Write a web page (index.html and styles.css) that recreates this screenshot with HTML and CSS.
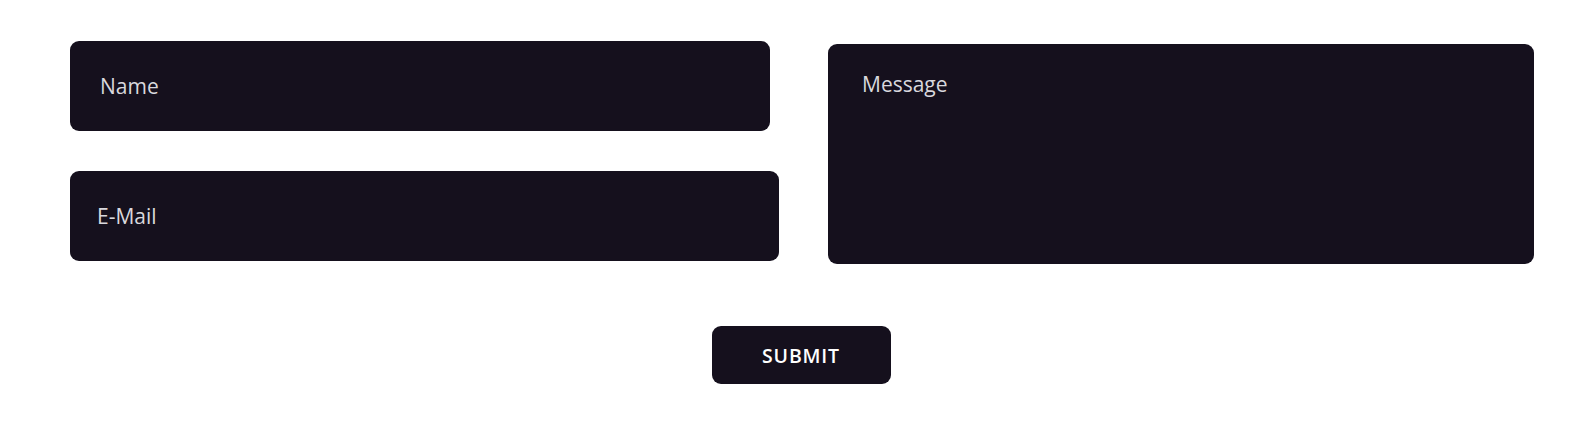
FILE: index.html
```html
<!DOCTYPE html>
<html lang="en">
<head>
<meta charset="utf-8">
<title>Contact</title>
<link rel="stylesheet" href="styles.css">
</head>
<body>
<form class="contact">
  <div class="fields">
    <div class="col-left">
      <input class="field field-name" type="text" placeholder="Name">
      <input class="field field-email" type="email" placeholder="E-Mail">
    </div>
    <textarea class="field field-message" placeholder="Message"></textarea>
  </div>
  <div class="actions">
    <button class="submit" type="button">SUBMIT</button>
  </div>
</form>
</body>
</html>
```

FILE: styles.css
```css
html, body {
  margin: 0;
  padding: 0;
  background: #ffffff;
}
body {
  font-family: "Open Sans", "Liberation Sans", sans-serif;
}
.contact {
  width: 1464px;
  padding: 41px 0 0 70px;
  display: flex;
  flex-direction: column;
}
.fields {
  display: flex;
  gap: 49px;
  align-items: flex-start;
}
.col-left {
  display: flex;
  flex-direction: column;
  gap: 40px;
  width: 709px;
}
.field {
  box-sizing: border-box;
  border: none;
  outline: none;
  background: #15101d;
  border-radius: 9px;
  color: #d9d8dd;
  font-family: "Open Sans", "Liberation Sans", sans-serif;
  font-size: 21px;
  margin: 0;
  display: block;
}
.field::placeholder {
  color: #d9d8dd;
  opacity: 1;
}
.field-name {
  width: 700px;
  height: 90px;
  padding: 0 0 0 30px;
}
.field-email {
  width: 709px;
  height: 90px;
  padding: 0 0 0 27px;
}
.field-message {
  width: 706px;
  height: 220px;
  margin-top: 3px;
  padding: 26px 0 0 34px;
  line-height: normal;
  resize: none;
}
.actions {
  display: flex;
  justify-content: center;
  margin-top: 62px;
  padding-right: 2px;
}
.submit {
  width: 179px;
  height: 58px;
  border: none;
  border-radius: 9px;
  background: #15101d;
  color: #ffffff;
  font-family: "Open Sans", "Liberation Sans", sans-serif;
  font-weight: 600;
  font-size: 19.5px;
  letter-spacing: 0.8px;
  padding: 0;
  cursor: pointer;
}
```
